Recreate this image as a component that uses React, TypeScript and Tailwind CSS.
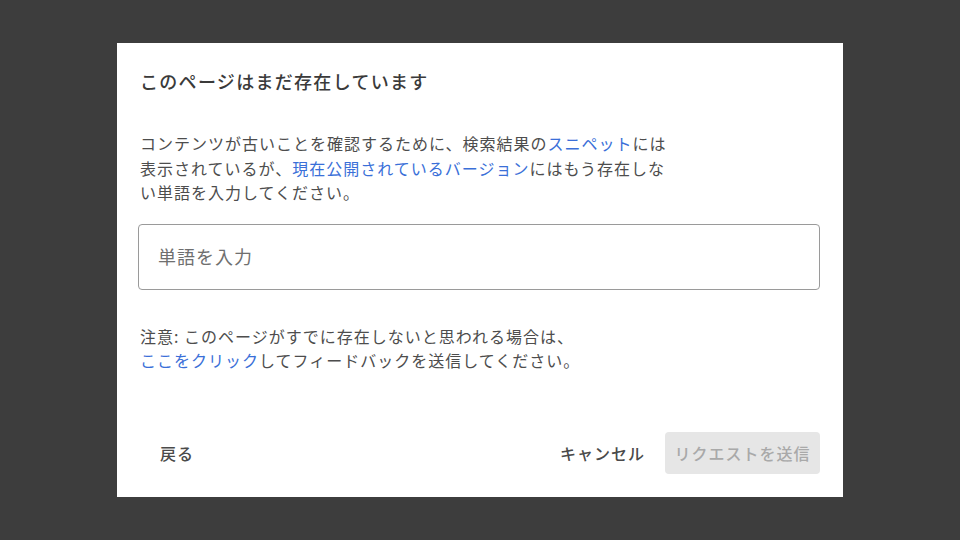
import React from "react";

const font = { fontFamily: '"Noto Sans CJK JP", "Noto Sans", sans-serif' };

export default function App() {
  return (
    <div
      className="w-[960px] h-[540px] bg-[#3d3d3d] flex items-center justify-center"
      style={font}
    >
      <div className="w-[726px] h-[454px] bg-white flex flex-col pl-[21px] pr-[23px] pt-[25px] pb-[23px]">
        <h1 className="pl-[2px] text-[18px] leading-[26px] tracking-[1.3px] font-medium text-[#3a3a3a]">
          このページはまだ存在しています
        </h1>
        <p className="mt-[37px] pl-[2px] text-[16px] leading-[24.5px] tracking-[1px] text-[#4d4d4d]">
          コンテンツが古いことを確認するために、検索結果の
          <span className="text-[#3a6fd8]">スニペット</span>には
          <br />
          表示されているが、
          <span className="text-[#3a6fd8]">現在公開されているバージョン</span>
          にはもう存在しな
          <br />
          い単語を入力してください。
        </p>
        <div className="mt-[19px] h-[66px] w-full border border-[#9a9a9a] rounded-[4px] flex items-center pl-[19px]">
          <span className="text-[18px] tracking-[1px] text-[#6f6f6f]">単語を入力</span>
        </div>
        <p className="mt-[34px] pl-[2px] text-[16px] leading-[24px] tracking-[1px] text-[#4d4d4d]">
          注意: このページがすでに存在しないと思われる場合は、
          <br />
          <span className="text-[#3a6fd8]">ここをクリック</span>
          してフィードバックを送信してください。
        </p>
        <div className="mt-auto flex items-center h-[42px]">
          <button className="h-[42px] pl-[22px] pr-[20px] text-[16px] tracking-[1px] font-medium text-[#4a4a4a]">
            戻る
          </button>
          <div className="ml-auto flex items-center">
            <button className="h-[42px] px-[20px] text-[16px] tracking-[1px] font-medium text-[#4a4a4a]">
              キャンセル
            </button>
            <button className="h-[42px] w-[155px] rounded-[4px] bg-[#e6e6e6] text-[16px] tracking-[1px] font-medium text-[#a9a9a9]">
              リクエストを送信
            </button>
          </div>
        </div>
      </div>
    </div>
  );
}
